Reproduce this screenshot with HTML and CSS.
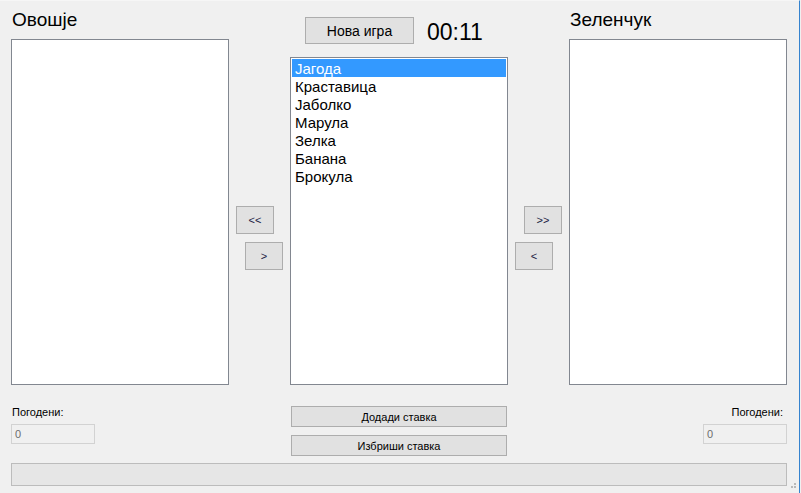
FILE: index.html
```html
<!DOCTYPE html>
<html lang="mk">
<head>
<meta charset="utf-8">
<title>Овошје и Зеленчук</title>
<link rel="stylesheet" href="styles.css">
</head>
<body>
<div class="window">
  <div class="main">
    <div class="col side">
      <div class="title">Овошје</div>
      <div class="listbox side-list"></div>
    </div>
    <div class="col arrows arrows-left">
      <button class="btn small indent-0">&lt;&lt;</button>
      <button class="btn small indent-9">&gt;</button>
    </div>
    <div class="col center">
      <div class="header">
        <button class="btn new-game">Нова игра</button>
        <div class="timer">00:11</div>
      </div>
      <div class="listbox center-list">
        <div class="item selected">Јагода</div>
        <div class="item">Краставица</div>
        <div class="item">Јаболко</div>
        <div class="item">Марула</div>
        <div class="item">Зелка</div>
        <div class="item">Банана</div>
        <div class="item">Брокула</div>
      </div>
    </div>
    <div class="col arrows arrows-right">
      <button class="btn small indent-9">&gt;&gt;</button>
      <button class="btn small indent-0">&lt;</button>
    </div>
    <div class="col side">
      <div class="title">Зеленчук</div>
      <div class="listbox side-list"></div>
    </div>
  </div>
  <div class="bottom">
    <div class="score score-left">
      <div class="score-label">Погодени:</div>
      <div class="textbox">0</div>
    </div>
    <div></div>
    <div class="actions">
      <button class="btn action">Додади ставка</button>
      <button class="btn action">Избриши ставка</button>
    </div>
    <div></div>
    <div class="score score-right">
      <div class="score-label">Погодени:</div>
      <div class="textbox">0</div>
    </div>
  </div>
  <div class="progress"></div>
  <svg class="grip" width="8" height="8" viewBox="0 0 8 8" aria-hidden="true">
    <rect x="5" y="0" width="2" height="2" fill="#b9b9b9"/>
    <rect x="2" y="3" width="2" height="2" fill="#b9b9b9"/>
    <rect x="5" y="3" width="2" height="2" fill="#b9b9b9"/>
  </svg>
</div>
</body>
</html>
```

FILE: styles.css
```css
* { box-sizing: border-box; }

html, body {
  margin: 0;
  padding: 0;
  background: #f0f0f0;
}

body {
  font-family: "Liberation Sans", Arial, sans-serif;
  color: #000;
}

.window {
  position: relative;
  width: 800px;
  height: 493px;
  padding-left: 11px;
  border-right: 1px solid #3583cf;
  border-top: 1px solid #f6f6f6;
  background: #f0f0f0;
}

.main {
  display: grid;
  grid-template-columns: 218px 61px 218px 61px 218px;
  height: 384px;
}

.col {
  display: flex;
  flex-direction: column;
}

.title {
  padding-top: 8px;
  padding-left: 1px;
  font-size: 19px;
  line-height: 22px;
  height: 38px;
}

.listbox {
  background: #fff;
  border: 1px solid #828790;
  padding: 1px;
}

.side-list {
  height: 346px;
}

.btn {
  font-family: "Liberation Sans", Arial, sans-serif;
  background: #e1e1e1;
  border: 1px solid #adadad;
  color: #000;
  padding: 0;
  margin: 0;
}

.arrows {
  padding-top: 205px;
  gap: 8px;
}

.small {
  width: 38px;
  height: 28px;
  font-size: 11px;
  color: #1c1c44;
}

.indent-0 { margin-left: 7px; }
.indent-9 { margin-left: 16px; }

.header {
  display: flex;
  align-items: center;
  padding-top: 16px;
  padding-left: 15px;
  gap: 13px;
  height: 56px;
  align-items: flex-start;
}

.new-game {
  width: 109px;
  height: 27px;
  font-size: 14px;
}

.timer {
  font-size: 23px;
  line-height: 27px;
  margin-top: 2px;
}

.center-list {
  height: 328px;
}

.item {
  font-size: 15px;
  line-height: 18px;
  height: 18px;
  padding-left: 3px;
  padding-top: 1px;
}

.item.selected {
  background: #3399ff;
  color: #fff;
}

.bottom {
  display: grid;
  grid-template-columns: 218px 61px 218px 61px 218px;
  height: 78px;
  padding-top: 21px;
}

.score {
  display: flex;
  flex-direction: column;
  gap: 5px;
}

.score-label {
  font-size: 11px;
  line-height: 13px;
  padding-left: 1px;
}

.score-right {
  align-items: flex-end;
}

.score-right .score-label {
  padding-right: 4px;
}

.textbox {
  width: 84px;
  height: 20px;
  border: 1px solid #d2d2d2;
  background: #f0f0f0;
  color: #6d6d6d;
  font-size: 11px;
  line-height: 18px;
  padding-left: 3px;
}

.actions {
  display: flex;
  flex-direction: column;
  gap: 8px;
  padding-left: 1px;
}

.action {
  width: 216px;
  height: 21px;
  font-size: 11px;
}

.progress {
  width: 776px;
  height: 23px;
  background: #e6e6e6;
  border: 1px solid #bcbcbc;
}

.grip {
  position: absolute;
  right: 2px;
  bottom: 2px;
}
```
